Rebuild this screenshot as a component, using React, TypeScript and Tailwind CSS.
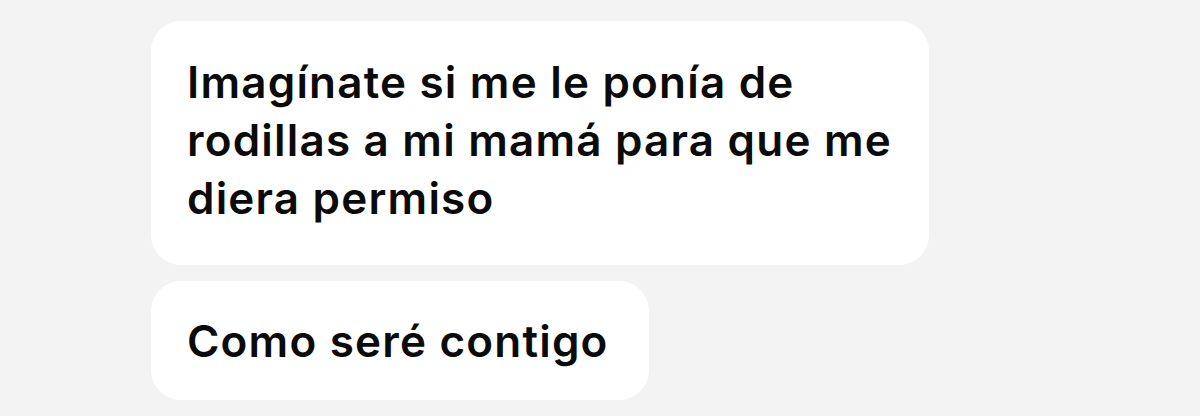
export default function App() {
  const lines = [
    'Imagínate si me le ponía de',
    'rodillas a mi mamá para que me',
    'diera permiso',
  ];

  return (
    <div
      className="min-h-[416px] w-[1200px] bg-[#f3f3f3] pl-[151px] pt-[21px] flex flex-col items-start gap-[16px]"
      style={{ fontFamily: 'Inter, "Noto Sans", sans-serif' }}
    >
      {/* First message */}
      <div className="bg-white rounded-[30px] pl-[36px] pr-[37px] pt-[32px] pb-[38px] text-[44px] leading-[58px] font-semibold text-[#0b0b0b] tracking-[1.2px]">
        {lines.map((line) => (
          <div key={line} className="whitespace-nowrap">
            {line}
          </div>
        ))}
      </div>

      {/* Second message */}
      <div className="bg-white rounded-[30px] pl-[36px] pr-[40px] pt-[31px] pb-[30px] text-[44px] leading-[58px] font-semibold text-[#0b0b0b] tracking-[1.2px] whitespace-nowrap">
        Como seré contigo
      </div>
    </div>
  );
}
